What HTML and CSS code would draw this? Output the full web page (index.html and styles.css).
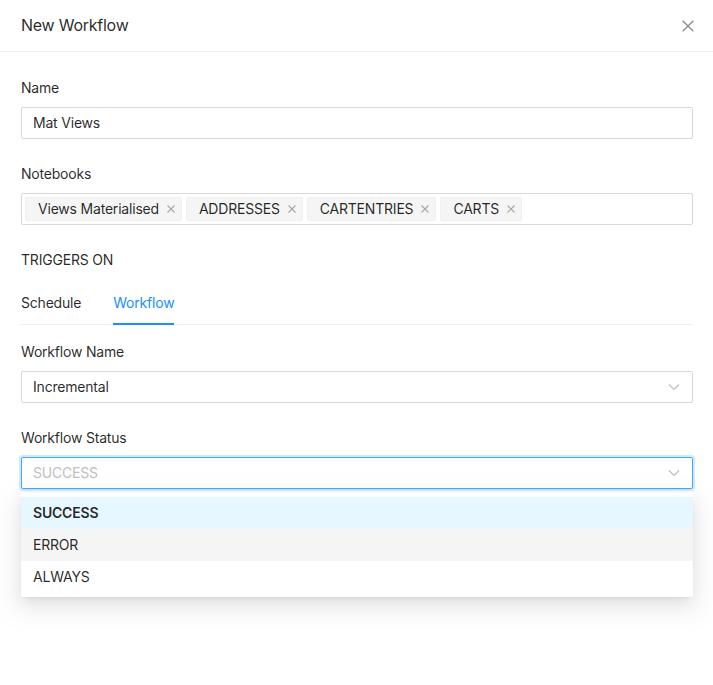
FILE: index.html
```html
<!DOCTYPE html>
<html>
<head>
<meta charset="utf-8">
<link rel="stylesheet" href="styles.css">
</head>
<body>
<div class="modal">
  <div class="modal-header">
    <div class="modal-title">New Workflow</div>
    <button class="close-btn" aria-label="Close">
      <svg width="12" height="12" viewBox="0 0 12 12"><path d="M0.7 0.7 L11.3 11.3 M11.3 0.7 L0.7 11.3" stroke="#8c8c8c" stroke-width="1.4" fill="none"/></svg>
    </button>
  </div>
  <div class="modal-body">
    <div class="field">
      <label class="label">Name</label>
      <div class="input">Mat Views</div>
    </div>
    <div class="field">
      <label class="label">Notebooks</label>
      <div class="input tags">
        <span class="tag">Views Materialised<svg class="tag-x" width="8" height="8" viewBox="0 0 8 8"><path d="M0.5 0.5 L7.5 7.5 M7.5 0.5 L0.5 7.5" stroke="#a6a6a6" stroke-width="1.1" fill="none"/></svg></span>
        <span class="tag">ADDRESSES<svg class="tag-x" width="8" height="8" viewBox="0 0 8 8"><path d="M0.5 0.5 L7.5 7.5 M7.5 0.5 L0.5 7.5" stroke="#a6a6a6" stroke-width="1.1" fill="none"/></svg></span>
        <span class="tag">CARTENTRIES<svg class="tag-x" width="8" height="8" viewBox="0 0 8 8"><path d="M0.5 0.5 L7.5 7.5 M7.5 0.5 L0.5 7.5" stroke="#a6a6a6" stroke-width="1.1" fill="none"/></svg></span>
        <span class="tag">CARTS<svg class="tag-x" width="8" height="8" viewBox="0 0 8 8"><path d="M0.5 0.5 L7.5 7.5 M7.5 0.5 L0.5 7.5" stroke="#a6a6a6" stroke-width="1.1" fill="none"/></svg></span>
      </div>
    </div>
    <div class="section-title">TRIGGERS ON</div>
    <div class="tabs">
      <div class="tab">Schedule</div>
      <div class="tab active">Workflow</div>
    </div>
    <div class="field first">
      <label class="label">Workflow Name</label>
      <div class="input select">
        <span>Incremental</span>
        <svg class="chev" width="12" height="8" viewBox="0 0 12 8"><path d="M1 1.5 L6 6.5 L11 1.5" stroke="#bfbfbf" stroke-width="1.2" fill="none"/></svg>
      </div>
    </div>
    <div class="field status">
      <label class="label">Workflow Status</label>
      <div class="input select focused">
        <span class="placeholder">SUCCESS</span>
        <svg class="chev" width="12" height="8" viewBox="0 0 12 8"><path d="M1 1.5 L6 6.5 L11 1.5" stroke="#bfbfbf" stroke-width="1.2" fill="none"/></svg>
      </div>
      <div class="dropdown">
        <div class="option selected">SUCCESS</div>
        <div class="option active">ERROR</div>
        <div class="option">ALWAYS</div>
      </div>
    </div>
  </div>
</div>
</body>
</html>
```
FILE: styles.css
```css
* { box-sizing: border-box; }
html, body { margin: 0; padding: 0; background: #fff; }
body {
  font-family: Inter, "Noto Sans", sans-serif;
  font-size: 14px;
  line-height: 22px;
  letter-spacing: -0.2px;
  color: rgba(0,0,0,0.85);
  width: 713px;
  height: 685px;
}
.modal { width: 713px; }
.modal-header {
  height: 52px;
  border-bottom: 1px solid #f0f0f0;
  display: flex;
  align-items: center;
  justify-content: space-between;
  padding: 0 19px 2px 21px;
}
.modal-title { font-size: 16px; font-weight: 400; color: rgba(0,0,0,0.85); line-height: 22px; letter-spacing: -0.25px; }
.close-btn { border: 0; background: none; padding: 0; width: 12px; height: 12px; display: flex; margin-top: 3px; }
.modal-body { padding: 25px 20px 0 21px; }
.field { display: flex; flex-direction: column; gap: 8px; margin-bottom: 24px; position: relative; }
.field.first { margin-top: 16px; }
.label { line-height: 22px; color: rgba(0,0,0,0.85); }
.input {
  height: 32px;
  border: 1px solid #d9d9d9;
  border-radius: 2px;
  padding: 4px 11px;
  line-height: 22px;
  display: flex;
  align-items: center;
}
.tags { padding: 3px 3px; gap: 4px; }
.tag {
  height: 24px;
  background: #f5f5f5;
  border: 1px solid #f0f0f0;
  border-radius: 2px;
  padding: 0 6px 0 12px;
  display: inline-flex;
  align-items: center;
  gap: 8px;
  line-height: 22px;
}
.tag-x { display: block; }
.section-title { line-height: 22px; }
.tabs {
  margin-top: 10px;
  display: flex;
  gap: 32px;
  border-bottom: 1px solid #f0f0f0;
  height: 44px;
}
.tab { padding: 11px 0 0; line-height: 22px; position: relative; }
.tab.active { color: #1890ff; }
.tab.active::after {
  content: "";
  position: absolute;
  left: 0; right: 0; bottom: -1px;
  height: 2px;
  background: #1890ff;
}
.select { justify-content: space-between; }
.chev { display: block; margin-right: 1px; }
.focused { border-color: #40a9ff; box-shadow: 0 0 0 2px rgba(24,144,255,0.2); }
.placeholder { color: #bfbfbf; }
.dropdown {
  position: absolute;
  top: 66px;
  left: 0; right: 0;
  background: #fff;
  border-radius: 2px;
  padding: 4px 0;
  box-shadow: 0 3px 6px -4px rgba(0,0,0,0.12), 0 6px 16px 0 rgba(0,0,0,0.08), 0 9px 28px 8px rgba(0,0,0,0.05);
}
.option { padding: 5px 12px; line-height: 22px; }
.option.selected { background: #e6f7ff; font-weight: 600; }
.option.active { background: #f5f5f5; }
```
